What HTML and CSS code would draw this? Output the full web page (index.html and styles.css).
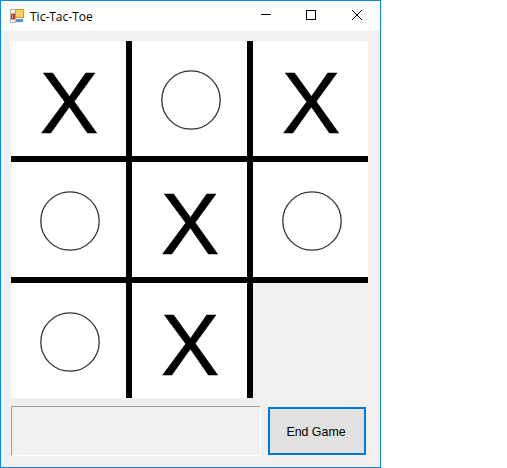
FILE: index.html
```html
<!DOCTYPE html>
<html lang="en-US">

<head>
    <title>Tic-Tac-Toe</title>
    <link rel="stylesheet" href="styles.css">
</head>

<body>
    <div class="window">
        <div class="titlebar">
            <svg class="app-icon" width="14" height="14" viewBox="0 0 14 14" shape-rendering="crispEdges">
                <rect x="0" y="0" width="14" height="14" fill="#b4b4b4" />
                <rect x="1" y="1" width="4" height="3" fill="#f4f4f4" />
                <rect x="1" y="11" width="4" height="2" fill="#f4f4f4" />
                <rect x="1" y="5" width="4" height="5" fill="#c8342c" />
                <rect x="2" y="6" width="1" height="3" fill="#f0a090" />
                <rect x="5" y="0" width="9" height="9" fill="#d89a18" />
                <rect x="6" y="1" width="7" height="7" fill="#f8d060" />
                <rect x="6" y="9" width="8" height="5" fill="#f4f4f4" />
                <rect x="6" y="10" width="7" height="3" fill="#5a8cdc" />
            </svg>
            <span class="title">Tic-Tac-Toe</span>
            <div class="controls">
                <svg width="10" height="10" viewBox="0 0 10 10"><path d="M0 4.5h10" stroke="#000" fill="none" /></svg>
                <svg class="maximize" width="10" height="10" viewBox="0 0 10 10"><rect x=".5" y=".5" width="9" height="9" stroke="#000" fill="none" /></svg>
                <svg width="10" height="10" viewBox="0 0 10 10"><path d="M0 0l10 10M10 0L0 10" stroke="#000" fill="none" /></svg>
            </div>
        </div>
        <div class="client">
            <div class="board">
                <div class="cell"><span class="cross">X</span></div>
                <div class="cell"><svg class="circle" width="60" height="60" viewBox="0 0 60 60"><circle cx="30" cy="30" r="29.2" /></svg></div>
                <div class="cell"><span class="cross">X</span></div>
                <div class="cell"><svg class="circle" width="60" height="60" viewBox="0 0 60 60"><circle cx="30" cy="30" r="29.2" /></svg></div>
                <div class="cell"><span class="cross">X</span></div>
                <div class="cell"><svg class="circle" width="60" height="60" viewBox="0 0 60 60"><circle cx="30" cy="30" r="29.2" /></svg></div>
                <div class="cell"><svg class="circle" width="60" height="60" viewBox="0 0 60 60"><circle cx="30" cy="30" r="29.2" /></svg></div>
                <div class="cell"><span class="cross">X</span></div>
                <div class="cell empty"></div>
            </div>
            <div class="bottom">
                <div class="status"></div>
                <button class="end-game">End Game</button>
            </div>
        </div>
    </div>
</body>

</html>
```

FILE: styles.css
```css
html {
    background-color: #fff;
}

body {
    margin: 0;
}

.window {
    width: 381px;
    height: 468px;
    box-sizing: border-box;
    border: 1px solid #1883d7;
    display: flex;
    flex-direction: column;
    background-color: #f0f0f0;
}

.titlebar {
    height: 30px;
    flex: none;
    display: flex;
    align-items: center;
    background-color: #fff;
    padding-left: 9px;
}

.app-icon {
    margin-right: 6px;
    margin-bottom: 1px;
}

.title {
    font-family: "Open Sans", sans-serif;
    font-size: 12px;
    color: #000;
}

.controls {
    margin-left: auto;
    display: flex;
    gap: 36px;
    padding-right: 18px;
    padding-bottom: 2px;
}

.controls svg {
    display: block;
}

.controls .maximize {
    margin-left: -1px;
}

.client {
    padding: 10px 0 0 10px;
}

.board {
    display: grid;
    grid-template-columns: repeat(3, 115px);
    grid-template-rows: repeat(3, 115px);
    gap: 6px;
    width: 357px;
    background-color: #000;
}

.cell {
    display: flex;
    align-items: center;
    justify-content: center;
    background-color: #fff;
}

.cell.empty {
    background-color: #f0f0f0;
}

.cross {
    padding: 8px 0 0 1px;
    font-family: "Liberation Sans", sans-serif;
    font-size: 88px;
    line-height: 1;
    color: #000;
    -webkit-text-stroke: 0.6px #000;
}

.circle {
    margin: 3px 0 0 3px;
    fill: none;
    stroke: #333;
    stroke-width: 1.3;
}

.bottom {
    display: flex;
    align-items: center;
    gap: 7px;
    margin-top: 8px;
}

.status {
    width: 250px;
    height: 50px;
    box-sizing: border-box;
    border: 1px solid #fff;
    border-top-color: #a0a0a0;
    border-left-color: #a0a0a0;
}

.end-game {
    width: 98px;
    height: 48px;
    box-sizing: border-box;
    border: 2px solid #0078d7;
    background-color: #e1e1e1;
    padding: 2px 2px 0 0;
    font-family: "Liberation Sans", sans-serif;
    font-size: 12.4px;
    color: #000;
}
```
